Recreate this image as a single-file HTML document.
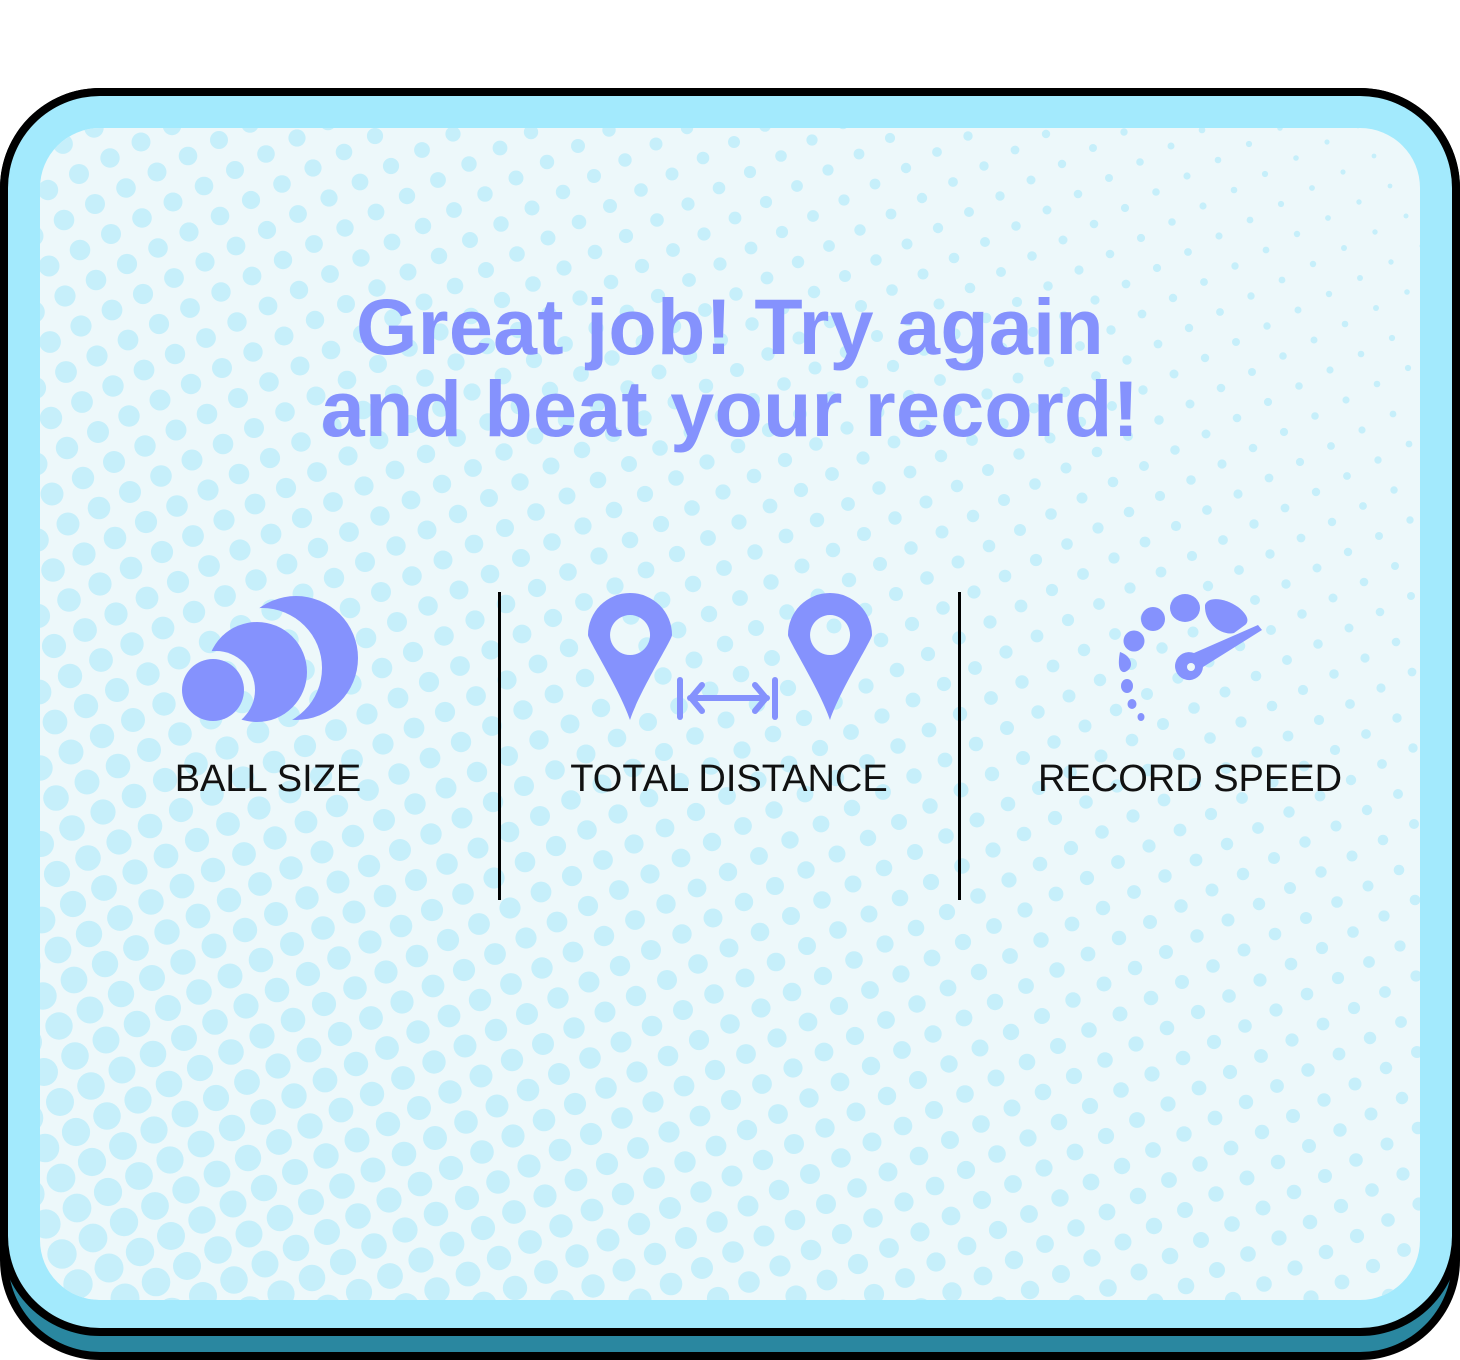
<!DOCTYPE html>
<html><head><meta charset="utf-8"><style>
*{margin:0;padding:0;box-sizing:border-box}
body{width:1460px;height:1360px;background:#fff;position:relative;overflow:hidden;font-family:"Liberation Sans",sans-serif}
.l{position:absolute}
#panel{left:40px;top:128px;width:1380px;height:1172px;border-radius:60px;background:#edf8fa;overflow:hidden}
h1{position:absolute;left:0;width:1460px;top:286px;text-align:center;color:#8592fd;font-size:79px;line-height:82px;font-weight:bold;letter-spacing:0.3px}
.lab{position:absolute;top:758px;font-size:38px;color:#111;text-align:center;width:400px}
.div{position:absolute;top:592px;width:3px;height:308px;background:#000}
</style></head><body>
<div class="l" style="left:0;top:88px;width:1460px;height:1272px;background:#000;border-radius:100px"></div>
<div class="l" style="left:8px;top:96px;width:1444px;height:1256px;background:#2a87a0;border-radius:92px"></div>
<div class="l" style="left:0;top:88px;width:1460px;height:1248px;background:#000;border-radius:100px"></div>
<div class="l" style="left:8px;top:96px;width:1444px;height:1232px;background:#a3eafd;border-radius:92px"></div>
<div class="l" id="panel"><svg id="dots" width="1380" height="1172"></svg></div>
<h1>Great job! Try again<br>and beat your record!</h1>
<svg class="l" style="left:0;top:0" width="1460" height="1360">
<defs><mask id="m"><rect width="1460" height="1360" fill="#fff"/><circle cx="262" cy="668" r="60" fill="#000"/></mask>
<mask id="m2"><rect width="1460" height="1360" fill="#fff"/><circle cx="216" cy="690" r="39" fill="#000"/></mask></defs>
<circle cx="296" cy="658" r="62" fill="#8592fd" mask="url(#m)"/>
<circle cx="257" cy="672" r="50" fill="#8592fd" mask="url(#m2)"/>
<circle cx="213" cy="690" r="31" fill="#8592fd"/>
<g fill="#8592fd">
<path d="M630 720 C620 690 588 640 588 635 A42 42 0 1 1 672 635 C672 640 640 690 630 720Z M630 615 A20 20 0 1 0 630.1 615Z" fill-rule="evenodd"/>
<path d="M830 720 C820 690 788 640 788 635 A42 42 0 1 1 872 635 C872 640 840 690 830 720Z M830 615 A20 20 0 1 0 830.1 615Z" fill-rule="evenodd"/>
</g>
<g stroke="#8592fd" stroke-width="6" stroke-linecap="round" fill="none">
<line x1="680" y1="680" x2="680" y2="717"/><line x1="775" y1="680" x2="775" y2="717"/>
<line x1="690" y1="698" x2="767" y2="698"/><path d="M702 685 L691 698 L702 711 M755 685 L766 698 L755 711"/>
</g>
<g fill="#8592fd">
<ellipse cx="1185" cy="608" rx="15" ry="14"/>
<path d="M1205 605 C1208 596 1225 598 1238 607 C1247 614 1250 621 1245 625 L1234 633 C1222 636 1204 624 1205 605Z"/>
<circle cx="1153" cy="619" r="12"/>
<circle cx="1134" cy="641" r="10.5"/>
<path d="M1120 652 C1132 656 1135 668 1125 672 C1118 673 1118 662 1120 652Z"/>
<ellipse cx="1127" cy="686" rx="6" ry="7"/>
<ellipse cx="1132" cy="704" rx="4.5" ry="5"/>
<ellipse cx="1141" cy="717" rx="3.5" ry="4"/>
<path d="M1258 625 L1262 630 L1203 667 A14 14 0 1 1 1194 653 Z"/>
</g>
<circle cx="1191" cy="667" r="4" fill="#edf8fa"/>
</svg>
<div class="div" style="left:498px"></div>
<div class="div" style="left:958px"></div>
<div class="lab" style="left:68px">BALL SIZE</div>
<div class="lab" style="left:529px">TOTAL DISTANCE</div>
<div class="lab" style="left:990px">RECORD SPEED</div>
<script>
var s=document.getElementById('dots'),h='';
for(var i=-60;i<80;i++)for(var j=-60;j<80;j++){
var x=i*31+j*16-40,y=-i*16+j*30-128+100;
if(x<-20||x>1400||y<-20||y>1190)continue;
var u=x/1380,v=y/1172,r=10+5*v-8*u;if(r<1.5)r=1.5;
h+='<circle cx="'+x.toFixed(1)+'" cy="'+y.toFixed(1)+'" r="'+r.toFixed(1)+'"/>';}
s.innerHTML='<g fill="#c6effa">'+h+'</g>';
</script>
</body></html>
